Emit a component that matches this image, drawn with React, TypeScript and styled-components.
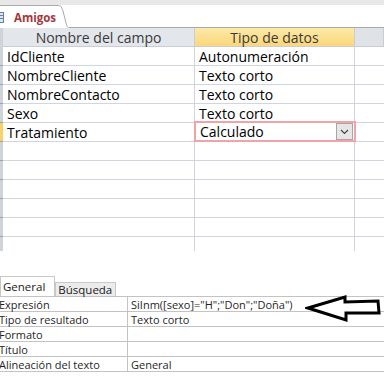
import React from "react";
import styled, { createGlobalStyle } from "styled-components";

const GlobalStyle = createGlobalStyle`
  html, body {
    margin: 0;
    padding: 0;
    background: #ffffff;
  }
  body {
    font-family: "Open Sans", "Noto Sans", sans-serif;
  }
`;

const Page = styled.div`
  position: relative;
  width: 384px;
  height: 383px;
  overflow: hidden;
  background: #ffffff;
`;

// Document tab strip

const TopStrip = styled.div`
  height: 5px;
  background: #e8e8e8;
`;

const TabRow = styled.div`
  display: flex;
  align-items: stretch;
  height: 23px;
`;

const DocTab = styled.div`
  display: flex;
  align-items: center;
  gap: 10px;
  width: 57px;
  border-top: 1px solid #a9a9a9;
  background: #ffffff;
  box-sizing: border-box;
`;

const TabIcon = styled.svg`
  margin-left: -8px;
  flex-shrink: 0;
`;

const TabLabel = styled.span`
  font-size: 11.5px;
  font-weight: 700;
  color: #a4373a;
`;

const TabFiller = styled.div`
  flex: 1;
  border-bottom: 1px solid #a9a9a9;
`;

// Field grid

const GridArea = styled.div`
  display: grid;
  grid-template-columns: 3px 192px 160px 1fr;
  grid-auto-rows: 19px;
  height: 223px;
  overflow: hidden;
`;

const Selector = styled.div<{ $active?: boolean; $head?: boolean }>`
  background: ${(p) => (p.$active ? "#f6d26a" : "#cfd4db")};
  border-bottom: 1px solid ${(p) => (p.$head ? "#cfd4db" : "#9aa2ad")};
`;

const HeadCell = styled.div<{ $tone: "plain" | "hot" | "blank" }>`
  display: flex;
  align-items: center;
  justify-content: center;
  font-size: 14px;
  color: #3a3a3a;
  background: ${(p) =>
    p.$tone === "hot"
      ? "linear-gradient(#fde9a8, #fbd77a)"
      : p.$tone === "plain"
      ? "#e3e6ea"
      : "#dfe2e7"};
  border-bottom: 1px solid #c9ced6;
  border-right: 1px solid #c9ced6;
  box-sizing: border-box;
`;

const Cell = styled.div<{ $last?: boolean }>`
  display: flex;
  align-items: center;
  padding-left: 4px;
  font-size: 14px;
  color: #000000;
  border-bottom: 1px solid #d0d5de;
  border-right: ${(p) => (p.$last ? "none" : "1px solid #d0d5de")};
  box-sizing: border-box;
  white-space: nowrap;
  overflow: hidden;
`;

const ActiveCell = styled.div`
  display: flex;
  align-items: center;
  justify-content: space-between;
  margin: -2px -1px 0 -1px;
  padding: 0 1px 0 4px;
  font-size: 14px;
  border: 2px solid #f2a3a7;
  background: #ffffff;
  z-index: 1;
`;

const DropButton = styled.div`
  display: flex;
  align-items: center;
  justify-content: center;
  width: 15px;
  height: 15px;
  background: #e6e6e6;
  border: 1px solid #a6a6a6;
`;

// Property sheet

const Gap = styled.div`
  height: 25px;
`;

const SheetTabs = styled.div`
  display: flex;
  align-items: flex-end;
  height: 20px;
`;

const SheetTab = styled.div<{ $active?: boolean }>`
  display: flex;
  align-items: center;
  height: ${(p) => (p.$active ? "20px" : "14px")};
  padding: ${(p) => (p.$active ? "0 9px 0 2px" : "0 3px 0 2px")};
  font-size: 11.5px;
  color: #1a1a1a;
  background: ${(p) => (p.$active ? "#ffffff" : "#ececec")};
  border: 1px solid #c8c8c8;
  border-bottom: none;
  box-sizing: border-box;
`;

const Sheet = styled.div`
  display: grid;
  grid-template-columns: 128px 1fr;
  grid-auto-rows: 15px;
  border-top: 1px solid #c3c3c3;
`;

const PropLabel = styled.div`
  display: flex;
  align-items: center;
  margin-left: -1px;
  font-size: 11px;
  color: #1f1f1f;
  border-bottom: 1px solid #c3c3c3;
  border-right: 1px solid #c3c3c3;
  white-space: nowrap;
`;

const PropValue = styled.div`
  display: flex;
  align-items: center;
  padding-left: 3px;
  font-size: 11px;
  color: #1f1f1f;
  border-bottom: 1px solid #c3c3c3;
  white-space: nowrap;
  overflow: hidden;
`;

const Arrow = styled.svg`
  position: absolute;
  left: 305px;
  top: 294px;
`;

const fields = [
  ["IdCliente", "Autonumeración"],
  ["NombreCliente", "Texto corto"],
  ["NombreContacto", "Texto corto"],
  ["Sexo", "Texto corto"],
];

const props = [
  ["Expresión", 'SiInm([sexo]="H";"Don";"Doña")'],
  ["Tipo de resultado", "Texto corto"],
  ["Formato", ""],
  ["Título", ""],
  ["Alineación del texto", "General"],
];

const App: React.FC = () => {
  const emptyRows = Array.from({ length: 6 });
  return (
    <Page>
      <GlobalStyle />
      <TopStrip />
      <TabRow>
        <DocTab>
          <TabIcon width="12" height="11" viewBox="0 0 12 11">
            <rect x="0.5" y="0.5" width="11" height="10" fill="#dbe4f0" stroke="#6b7f99" />
            <path d="M0 3.5h12M0 6.5h12M4.5 0v11" stroke="#6b7f99" />
          </TabIcon>
          <TabLabel>Amigos</TabLabel>
        </DocTab>
        <svg width="12" height="23" viewBox="0 0 12 23">
          <path d="M0 0.5 C4 0.5 4 1 6 6 L9 18 C10 21.5 10.5 22.5 12 22.5" fill="#ffffff" stroke="#a9a9a9" />
        </svg>
        <TabFiller />
      </TabRow>

      <GridArea>
        <Selector $head />
        <HeadCell $tone="plain">Nombre del campo</HeadCell>
        <HeadCell $tone="hot">Tipo de datos</HeadCell>
        <HeadCell $tone="blank" />

        {fields.map(([name, type]) => (
          <React.Fragment key={name}>
            <Selector />
            <Cell>{name}</Cell>
            <Cell>{type}</Cell>
            <Cell $last />
          </React.Fragment>
        ))}

        <Selector $active />
        <Cell>Tratamiento</Cell>
        <ActiveCell>
          Calculado
          <DropButton>
            <svg width="9" height="6" viewBox="0 0 9 6">
              <path d="M1 1l3.5 3.5L8 1" fill="none" stroke="#444" strokeWidth="1.2" />
            </svg>
          </DropButton>
        </ActiveCell>
        <Cell $last />

        {emptyRows.map((_, i) => (
          <React.Fragment key={i}>
            <Selector />
            <Cell />
            <Cell />
            <Cell $last />
          </React.Fragment>
        ))}
      </GridArea>

      <Gap />
      <SheetTabs>
        <SheetTab $active>General</SheetTab>
        <SheetTab>Búsqueda</SheetTab>
      </SheetTabs>
      <Sheet>
        {props.map(([label, value]) => (
          <React.Fragment key={label}>
            <PropLabel>{label}</PropLabel>
            <PropValue>{value}</PropValue>
          </React.Fragment>
        ))}
      </Sheet>

      <Arrow width="80" height="30" viewBox="0 0 80 30">
        <path
          d="M3 14 L40 3 L40 8 L73 7 L74 19 L41 19 L41 26 Z"
          fill="#ffffff"
          stroke="#000000"
          strokeWidth="3"
          strokeLinejoin="miter"
        />
      </Arrow>
    </Page>
  );
};

export default App;
